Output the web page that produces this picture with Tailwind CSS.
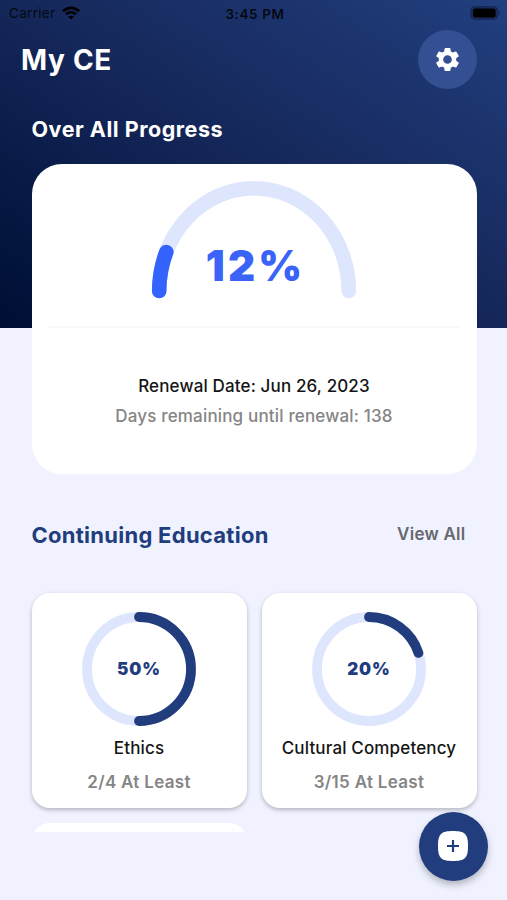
<!DOCTYPE html>
<html lang="en">
<head>
<meta charset="utf-8">
<title>My CE</title>
<script src="https://cdn.jsdelivr.net/npm/@tailwindcss/browser@4"></script>
</head>
<body class="bg-[#f0f3ff] font-['Inter',sans-serif]">
<div class="relative h-[900px] w-[507px] overflow-hidden bg-[#f0f3ff]">
  <header class="h-[327.5px] bg-linear-to-tr from-[#000e34] via-[#152759] to-[#213f7f]">
    <div class="grid h-[28px] grid-cols-3 items-center pl-[9px] pr-[6px] text-[13px] leading-none text-black/80">
      <div class="flex items-center gap-[7px]">
        <span class="text-[13.5px] tracking-[0.3px]">Carrier</span>
        <svg class="-mt-[2px] h-[14px] w-[18px]" viewBox="0 0 18 14" fill="none" stroke="#000" stroke-width="2.6">
          <path d="M1 5.2C5.6.8 12.4.8 17 5.2"/><path d="M4.1 8.2C6.9 5.6 11.1 5.6 13.9 8.2"/><path d="M9 13.6 6.2 10.8Q9 8.6 11.8 10.8Z" fill="#000" stroke="none"/>
        </svg>
      </div>
      <span class="whitespace-nowrap pt-px text-center text-[13.5px] font-semibold tracking-[0.6px] text-black/85">3:45 PM</span>
      <svg class="-mt-[2px] ml-auto h-[14px] w-[31px]" viewBox="0 0 31 14">
        <rect x="0.7" y="0.7" width="27" height="12.6" rx="4" fill="#182c5c" stroke="#142652"/><rect x="3" y="2.6" width="22.6" height="9" rx="2.4" fill="#000"/><path d="M29 4.8q2 2.2 0 4.4z" fill="#142652"/>
      </svg>
    </div>
    <div class="flex items-center justify-between pl-[21px] pr-[30.5px] pt-[2px]">
      <h1 class="text-[28px] font-bold tracking-[0.7px] text-white">My CE</h1>
      <div class="flex size-[59px] items-center justify-center rounded-full bg-[#345093]">
        <svg class="size-[29px]" viewBox="0 0 24 24" fill="#fff"><path d="M19.14 12.94c.04-.3.06-.61.06-.94 0-.32-.02-.64-.07-.94l2.03-1.58a.49.49 0 0 0 .12-.61l-1.92-3.32a.49.49 0 0 0-.59-.22l-2.39.96a7.03 7.03 0 0 0-1.62-.94l-.36-2.54a.48.48 0 0 0-.48-.41h-3.84a.47.47 0 0 0-.47.41l-.36 2.54c-.59.24-1.13.57-1.62.94l-2.39-.96a.48.48 0 0 0-.59.22L2.74 8.87a.47.47 0 0 0 .12.61l2.03 1.58c-.05.3-.09.63-.09.94s.02.64.07.94l-2.03 1.58a.49.49 0 0 0-.12.61l1.92 3.32c.12.22.37.29.59.22l2.39-.96c.5.38 1.03.7 1.62.94l.36 2.54c.05.24.24.41.48.41h3.84c.24 0 .44-.17.47-.41l.36-2.54c.59-.24 1.13-.56 1.62-.94l2.39.96c.22.08.47 0 .59-.22l1.92-3.32a.47.47 0 0 0-.12-.61zM12 15.6A3.6 3.6 0 1 1 12 8.4a3.6 3.6 0 0 1 0 7.2z"/></svg>
      </div>
    </div>
    <h2 class="pl-[31.5px] pt-[24px] text-[21.5px] font-bold leading-[32px] tracking-[0.53px] text-white">Over All Progress</h2>
  </header>

  <main class="relative -mt-[163.5px] px-[31.5px]">
    <section class="h-[310px] w-[445px] rounded-[30px] bg-white">
      <div class="mx-[17px] flex h-[164px] justify-center border-b-2 border-[#f8f8f8] pt-[15px]">
        <div class="grid h-[122px] w-[208px] place-items-center">
          <svg class="col-start-1 row-start-1 h-[122px] w-[208px]" viewBox="0 0 208 122" fill="none" stroke-width="14.6" stroke-linecap="round">
            <path d="M9.2 112A94.8 102.7 0 0 1 198.8 112" stroke="#dee6fe"/>
            <path d="M9.2 112A94.8 102.7 0 0 1 16.3 73" stroke="#3462fc"/>
          </svg>
          <span class="col-start-1 row-start-1 mt-[51px] pl-[3px] text-[42px] font-black leading-none tracking-[3.2px] text-[#3a63f8]">12%</span>
        </div>
      </div>
      <p class="pt-[43px] text-center text-[17px] font-medium leading-[30px] tracking-[0.14px] text-[#151515]">Renewal Date: Jun 26, 2023</p>
      <p class="text-center text-[17px] font-medium leading-[31px] tracking-[0.17px] text-[#858585]">Days remaining until renewal: 138</p>
    </section>

    <div class="flex h-[119px] items-center justify-between pr-[10px] pt-[3px]">
      <h2 class="text-[22px] font-bold tracking-[0.27px] text-[#213d7d]">Continuing Education</h2>
      <span class="text-[17px] font-semibold tracking-[0.25px] text-[#66686e]">View All</span>
    </div>

    <section class="-mx-[10px] h-[242px] overflow-hidden px-[10px] pt-[3px] -mt-[3px]">
      <div class="grid grid-cols-[215px_215px] gap-x-[15px] gap-y-[15px]">
        <article class="flex h-[215px] flex-col items-center rounded-[18px] bg-white pt-[19px] shadow-[0_2px_4px_rgba(0,0,0,0.26)]">
          <div class="grid size-[114px] place-items-center">
            <svg class="col-start-1 row-start-1 size-[114px]" viewBox="-57 -57 114 114" fill="none" stroke-width="9.8" stroke-linecap="round">
              <circle r="52" stroke="#dee6fe"/><path d="M0-52A52 52 0 0 1 0 52" stroke="#213d7d"/>
            </svg>
            <span class="col-start-1 row-start-1 pt-[2px] text-[17px] font-black tracking-[0.9px] text-[#213d7d]">50%</span>
          </div>
          <p class="mt-[7px] text-[17px] font-medium leading-[30px] tracking-[0.15px] text-[#151515]">Ethics</p>
          <p class="mt-[4px] text-[17px] font-semibold leading-[30px] tracking-[0.3px] text-[#858585]">2/4 At Least</p>
        </article>
        <article class="flex h-[215px] flex-col items-center rounded-[18px] bg-white pt-[19px] shadow-[0_2px_4px_rgba(0,0,0,0.26)]">
          <div class="grid size-[114px] place-items-center">
            <svg class="col-start-1 row-start-1 size-[114px]" viewBox="-57 -57 114 114" fill="none" stroke-width="9.8" stroke-linecap="round">
              <circle r="52" stroke="#dee6fe"/><path d="M0-52A52 52 0 0 1 49.45-16.07" stroke="#213d7d"/>
            </svg>
            <span class="col-start-1 row-start-1 pt-[2px] text-[17px] font-black tracking-[0.9px] text-[#213d7d]">20%</span>
          </div>
          <p class="mt-[7px] text-[17px] font-medium leading-[30px] tracking-[0.15px] text-[#151515]">Cultural Competency</p>
          <p class="mt-[4px] text-[17px] font-semibold leading-[30px] tracking-[0.3px] text-[#858585]">3/15 At Least</p>
        </article>
        <article class="h-[215px] rounded-[18px] bg-white"></article>
      </div>
    </section>
  </main>

  <div class="absolute left-[419px] top-[812px] flex size-[68.5px] items-center justify-center rounded-full bg-[#213d7d] shadow-[0_4px_7px_rgba(0,0,0,0.26)]">
    <svg class="size-[30px]" viewBox="0 0 30 30"><path d="M15 0C27 0 30 3 30 15S27 30 15 30 0 27 0 15 3 0 15 0Z" fill="#fff"/><path d="M15 9V21M9 15H21" stroke="#213d7d" stroke-width="2.2"/></svg>
  </div>
</div>
</body>
</html>
